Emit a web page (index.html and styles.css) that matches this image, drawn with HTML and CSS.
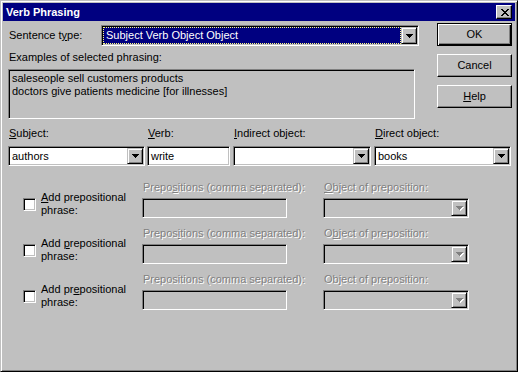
FILE: index.html
```html
<!DOCTYPE html>
<html lang="en">
<head>
    <meta charset="UTF-8">
    <title>Verb Phrasing</title>
    <link rel="stylesheet" href="styles.css">
</head>
<body>
    <div class="window">
        <div class="titlebar">
            <span class="title">Verb Phrasing</span>
            <span class="close-btn">
                <svg class="close-x" width="8" height="7" viewBox="0 0 8 7"><path d="M0 0h2v1h-2zM6 0h2v1h-2zM1 1h2v1h-2zM5 1h2v1h-2zM2 2h4v1h-4zM3 3h2v1h-2zM2 4h4v1h-4zM1 5h2v1h-2zM5 5h2v1h-2zM0 6h2v1h-2zM6 6h2v1h-2z"/></svg>
            </span>
        </div>
        <div class="content">
            <div class="top">
                <div class="top-left">
                    <div class="type-row">
                        <span class="type-label">Sentence t<u>y</u>pe:</span>
                        <div class="combo combo-type">
                            <span class="combo-text"><span class="selection">Subject Verb Object Object</span></span>
                            <span class="drop-btn"><svg class="arrow" width="7" height="4" viewBox="0 0 7 4"><path d="M0 0h7v1h-7zM1 1h5v1h-5zM2 2h3v1h-3zM3 3h1v1h-1z"/></svg></span>
                        </div>
                    </div>
                    <div class="examples-label">Examples of selected phrasing:</div>
                    <div class="examples">
                        <div>saleseople sell customers products</div>
                        <div>doctors give patients medicine [for illnesses]</div>
                    </div>
                </div>
                <div class="buttons">
                    <button class="btn btn-default">OK</button>
                    <button class="btn">Cancel</button>
                    <button class="btn"><u>H</u>elp</button>
                </div>
            </div>

            <div class="fields">
                <div class="field field-subject">
                    <span class="field-label"><u>S</u>ubject:</span>
                    <div class="combo">
                        <span class="combo-text">authors</span>
                        <span class="drop-btn"><svg class="arrow" width="7" height="4" viewBox="0 0 7 4"><path d="M0 0h7v1h-7zM1 1h5v1h-5zM2 2h3v1h-3zM3 3h1v1h-1z"/></svg></span>
                    </div>
                </div>
                <div class="field field-verb">
                    <span class="field-label"><u>V</u>erb:</span>
                    <div class="edit"><span class="combo-text">write</span></div>
                </div>
                <div class="field field-indirect">
                    <span class="field-label"><u>I</u>ndirect object:</span>
                    <div class="combo">
                        <span class="combo-text"></span>
                        <span class="drop-btn"><svg class="arrow" width="7" height="4" viewBox="0 0 7 4"><path d="M0 0h7v1h-7zM1 1h5v1h-5zM2 2h3v1h-3zM3 3h1v1h-1z"/></svg></span>
                    </div>
                </div>
                <div class="field field-direct">
                    <span class="field-label"><u>D</u>irect object:</span>
                    <div class="combo">
                        <span class="combo-text">books</span>
                        <span class="drop-btn"><svg class="arrow" width="7" height="4" viewBox="0 0 7 4"><path d="M0 0h7v1h-7zM1 1h5v1h-5zM2 2h3v1h-3zM3 3h1v1h-1z"/></svg></span>
                    </div>
                </div>
            </div>

            <div class="preps">
                <div class="prep-row">
                    <div class="check">
                        <span class="checkbox"></span>
                        <span class="check-label"><u>A</u>dd prepositional<br>phrase:</span>
                    </div>
                    <div class="prep-col">
                        <span class="field-label disabled">Prepo<u>s</u>itions (comma separated):</span>
                        <div class="edit edit-disabled"></div>
                    </div>
                    <div class="obj-col">
                        <span class="field-label disabled"><u>O</u>bject of preposition:</span>
                        <div class="combo combo-disabled">
                            <span class="combo-text"></span>
                            <span class="drop-btn"><svg class="arrow" width="7" height="4" viewBox="0 0 7 4"><path d="M0 0h7v1h-7zM1 1h5v1h-5zM2 2h3v1h-3zM3 3h1v1h-1z"/></svg></span>
                        </div>
                    </div>
                </div>
                <div class="prep-row">
                    <div class="check">
                        <span class="checkbox"></span>
                        <span class="check-label">Add <u>p</u>repositional<br>phrase:</span>
                    </div>
                    <div class="prep-col">
                        <span class="field-label disabled">Prepos<u>i</u>tions (comma separated):</span>
                        <div class="edit edit-disabled"></div>
                    </div>
                    <div class="obj-col">
                        <span class="field-label disabled">O<u>b</u>ject of preposition:</span>
                        <div class="combo combo-disabled">
                            <span class="combo-text"></span>
                            <span class="drop-btn"><svg class="arrow" width="7" height="4" viewBox="0 0 7 4"><path d="M0 0h7v1h-7zM1 1h5v1h-5zM2 2h3v1h-3zM3 3h1v1h-1z"/></svg></span>
                        </div>
                    </div>
                </div>
                <div class="prep-row">
                    <div class="check">
                        <span class="checkbox"></span>
                        <span class="check-label">Add pr<u>e</u>positional<br>phrase:</span>
                    </div>
                    <div class="prep-col">
                        <span class="field-label disabled">Prepositions (comma separated):</span>
                        <div class="edit edit-disabled"></div>
                    </div>
                    <div class="obj-col">
                        <span class="field-label disabled">Object of preposition:</span>
                        <div class="combo combo-disabled">
                            <span class="combo-text"></span>
                            <span class="drop-btn"><svg class="arrow" width="7" height="4" viewBox="0 0 7 4"><path d="M0 0h7v1h-7zM1 1h5v1h-5zM2 2h3v1h-3zM3 3h1v1h-1z"/></svg></span>
                        </div>
                    </div>
                </div>
            </div>
        </div>
    </div>
</body>
</html>
```

FILE: styles.css
```css
body {
    margin: 0;
    font-family: "Liberation Sans", Arial, sans-serif;
    font-size: 11px;
    line-height: 13px;
    color: #000;
    background: #c0c0c0;
}
.window {
    width: 518px;
    height: 372px;
    box-sizing: border-box;
    background: #c0c0c0;
    border: 1px solid;
    border-color: #c0c0c0 #000 #000 #c0c0c0;
    box-shadow: inset 1px 1px #fff, inset -1px -1px #808080;
    padding: 2px;
}
.titlebar {
    height: 18px;
    background: #000080;
    color: #fff;
    font-weight: bold;
    display: flex;
    align-items: center;
    justify-content: space-between;
    padding: 0 3px;
}
.close-btn {
    width: 16px;
    height: 14px;
    box-sizing: border-box;
    background: #c0c0c0;
    border: 1px solid;
    border-color: #fff #000 #000 #fff;
    box-shadow: inset -1px -1px #808080;
    display: flex;
    align-items: center;
    justify-content: center;
}
.close-x {
    fill: #000;
    margin: 1px 0 0 1px;
}
.content {
    padding: 2px 3px 0 5px;
}
.top {
    display: flex;
    justify-content: space-between;
}
.top-left {
    width: 411px;
}
.type-row {
    display: flex;
    align-items: center;
    margin-top: 2px;
}
.type-label {
    width: 93px;
    padding-left: 1px;
    box-sizing: border-box;
}
.examples-label {
    margin: 5px 0 5px 1px;
}
.examples {
    width: 407px;
    height: 50px;
    box-sizing: border-box;
    border: 1px solid;
    border-color: #808080 #fff #fff #808080;
    box-shadow: inset 1px 1px #000, inset -1px -1px #c0c0c0;
    padding: 2px 3px;
}
.buttons {
    display: flex;
    flex-direction: column;
    gap: 8px;
}
.btn {
    width: 75px;
    height: 23px;
    box-sizing: border-box;
    padding: 0;
    font: inherit;
    color: #000;
    background: #c0c0c0;
    border: 1px solid;
    border-color: #fff #000 #000 #fff;
    box-shadow: inset -1px -1px #808080;
    border-radius: 0;
}
.btn-default {
    border-color: #000;
    box-shadow: inset 1px 1px #fff, inset -1px -1px #000, inset -2px -2px #808080;
}

/* sunken fields */
.combo,
.edit {
    height: 20px;
    box-sizing: border-box;
    display: flex;
    background: #fff;
    border: 1px solid;
    border-color: #808080 #fff #fff #808080;
    box-shadow: inset 1px 1px #000, inset -1px -1px #c0c0c0;
    padding: 1px;
}
.combo-type {
    width: 318px;
    height: 21px;
}
.combo-text {
    flex: 1;
    display: flex;
    align-items: center;
    padding-left: 2px;
    white-space: nowrap;
    overflow: hidden;
}
.combo-type .combo-text {
    padding: 0;
}
.selection {
    flex: 1;
    align-self: stretch;
    display: flex;
    align-items: center;
    background: #000080;
    color: #fff;
    border: 1px dotted #ffff80;
    padding-left: 2px;
}
.drop-btn {
    width: 16px;
    box-sizing: border-box;
    background: #c0c0c0;
    border: 1px solid;
    border-color: #c0c0c0 #000 #000 #c0c0c0;
    box-shadow: inset 1px 1px #fff, inset -1px -1px #808080;
    display: flex;
    align-items: center;
    justify-content: center;
}
.arrow {
    fill: #000;
    margin-left: 1px;
}
.combo-disabled,
.edit-disabled {
    background: #c0c0c0;
}
.combo-disabled .arrow {
    fill: #808080;
    filter: drop-shadow(1px 1px 0 #fff);
}

.fields {
    display: flex;
    margin-top: 8px;
}
.field-label {
    display: block;
    margin: 0 0 6px 1px;
    white-space: nowrap;
}
.field-subject { width: 137px; margin-right: 2px; }
.field-verb { width: 83px; margin-right: 3px; }
.field-indirect { width: 138px; margin-right: 3px; }
.field-direct { width: 137px; }

.preps {
    display: flex;
    flex-direction: column;
    gap: 9px;
    margin-top: 15px;
}
.prep-row {
    display: flex;
}
.prep-row .field-label {
    margin-bottom: 4px;
}
.check {
    width: 134px;
    display: flex;
    align-items: center;
    align-self: flex-start;
    padding-top: 10px;
}
.checkbox {
    width: 13px;
    height: 13px;
    box-sizing: border-box;
    margin: 0 5px 0 15px;
    background: #fff;
    border: 1px solid;
    border-color: #808080 #fff #fff #808080;
    box-shadow: inset 1px 1px #000, inset -1px -1px #c0c0c0;
}
.prep-col {
    width: 145px;
}
.obj-col {
    width: 146px;
    margin-left: 36px;
}
.disabled {
    color: #808080;
    text-shadow: 1px 1px 0 #fff;
}
```
